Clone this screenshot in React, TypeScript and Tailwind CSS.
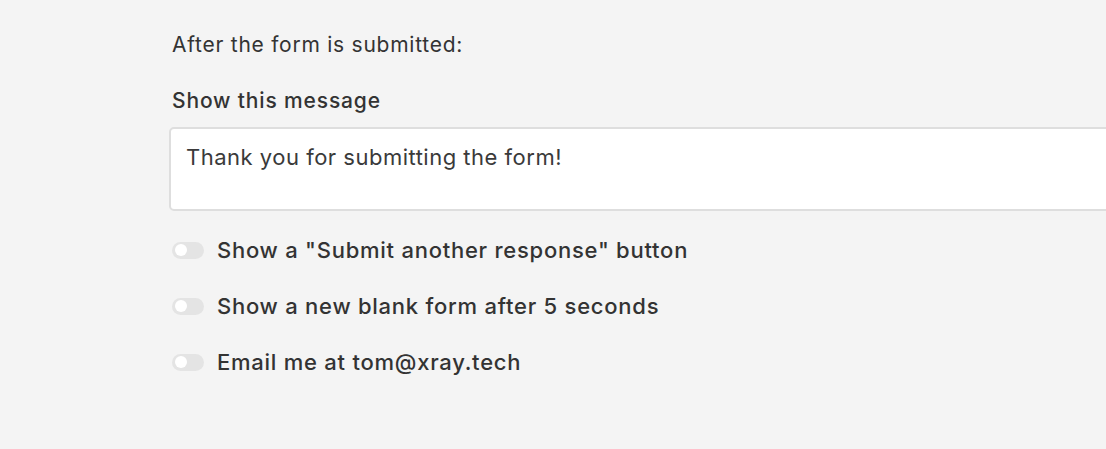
import React from "react";

function Toggle() {
  return (
    <span className="relative inline-flex h-[17px] w-[32px] shrink-0 items-center rounded-full bg-[#e4e4e4]">
      <span className="ml-[3px] h-[12px] w-[12px] rounded-full bg-white" />
    </span>
  );
}

const options = [
  'Show a "Submit another response" button',
  "Show a new blank form after 5 seconds",
  "Email me at tom@xray.tech",
];

export default function App() {
  return (
    <div
      className="h-[449px] w-[1106px] overflow-hidden bg-[#f4f4f4] pl-[169px] pt-[31px] text-[#333]"
      style={{ fontFamily: "Inter, 'Noto Sans', sans-serif" }}
    >
      <p className="pl-[3px] text-[21px] leading-[28px] tracking-[0.75px]">After the form is submitted:</p>
      <p className="mt-[28px] pl-[3px] text-[21px] font-medium leading-[28px] tracking-[0.85px]">
        Show this message
      </p>
      <div className="mt-[12px] h-[84px] w-[1000px] rounded-[5px] border-2 border-[#dedede] bg-white px-[15px] pt-[14px]">
        <span className="text-[22px] leading-[28px] tracking-[0.5px] text-[#3a3a3a]">
          Thank you for submitting the form!
        </span>
      </div>
      <div className="mt-[25px] flex flex-col gap-[28px] pl-[3px]">
        {options.map((o) => (
          <label key={o} className="flex h-[28px] items-center gap-[13px]">
            <Toggle />
            <span className="text-[22px] font-medium leading-[28px] tracking-[0.75px]">{o}</span>
          </label>
        ))}
      </div>
    </div>
  );
}
